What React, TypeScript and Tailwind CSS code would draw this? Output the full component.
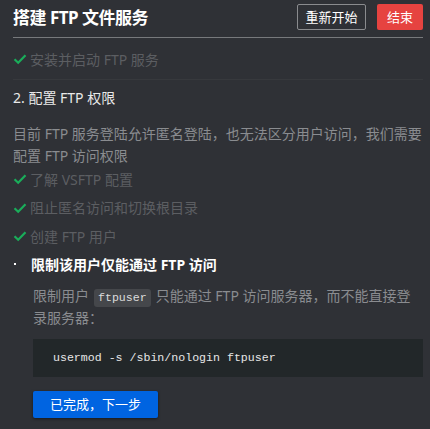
import React from 'react';

const font = { fontFamily: '"Noto Sans", "Noto Sans CJK SC", sans-serif' };
const mono = { fontFamily: '"Liberation Mono", monospace' };

const Check: React.FC = () => (
    <svg viewBox="0 0 14 14" className="h-[14px] w-[14px] mr-[3px] shrink-0" fill="none">
        <path d="M1.5 7.2 L5.2 10.8 L12.5 3.2" stroke="#1aad5a" strokeWidth="2.2" strokeLinejoin="miter" />
    </svg>
);

const DoneItem: React.FC<{ label: string }> = ({ label }) => (
    <div className="flex items-center h-[20px] text-[14px] text-[#5c5e62]">
        <Check />
        <span>{label}</span>
    </div>
);

const App: React.FC = () => {
    return (
        <div className="w-[430px] h-[429px] bg-[#2f3136] pl-[13px] pr-[7px] pt-[4px] overflow-hidden" style={font}>
            <div className="flex items-center justify-between h-[26px]">
                <h1 className="text-[17px] font-bold text-white leading-none tracking-[-0.5px]">搭建 FTP 文件服务</h1>
                <div className="flex gap-[11px]">
                    <button className="h-[26px] w-[69px] border border-[#8a8b8e] rounded-[2px] text-[13px] text-white leading-none">重新开始</button>
                    <button className="h-[26px] w-[46px] bg-[#e64340] rounded-[2px] text-[13px] text-white leading-none">结束</button>
                </div>
            </div>
            <div className="mt-[7px] h-px bg-[#77797c]" />

            <div className="pt-[11px] pb-[10px] border-b border-[#37393d]">
                <DoneItem label="安装并启动 FTP 服务" />
            </div>

            <h2 className="mt-[7px] h-[20px] flex items-center text-[14px] text-[#e9e9e9]">2. 配置 FTP 权限</h2>

            <p className="mt-[16px] text-[14px] leading-[22px] text-[#8a8c90]">
                目前 FTP 服务登陆允许匿名登陆，也无法区分用户访问，我们需要配置 FTP 访问权限
            </p>

            <div className="mt-[2px] flex flex-col gap-[8.5px]">
                <DoneItem label="了解 VSFTP 配置" />
                <DoneItem label="阻止匿名访问和切换根目录" />
                <DoneItem label="创建 FTP 用户" />
            </div>

            <div className="mt-[8px] flex items-center h-[20px]">
                <span className="w-[2px] h-[2px] bg-white mr-[15px] ml-[1px]" />
                <span className="text-[14px] font-bold text-white">限制该用户仅能通过 FTP 访问</span>
            </div>

            <div className="pl-[20px]">
                <p className="mt-[11px] text-[14px] leading-[21px] text-[#8a8c90] whitespace-nowrap">
                    <span>限制用户</span>
                    <code className="inline-block mx-[5px] leading-[18px] bg-[#45474b] text-[#dcdcdc] rounded-[3px] px-[4px] text-[11.6px]" style={mono}>ftpuser</code>
                    <span>只能通过 FTP 访问服务器，而不能直接登</span>
                    <br />
                    <span>录服务器：</span>
                </p>
                <pre className="mt-[11px] h-[38px] bg-[#222729] flex items-center px-[20px] text-[11.6px] text-[#e6e6e6]" style={mono}>usermod -s /sbin/nologin ftpuser</pre>
                <button className="mt-[14px] h-[27px] w-[125px] bg-[#0064e1] rounded-[2px] text-[13px] text-white shadow-[0_1px_3px_rgba(0,0,0,0.5)]">已完成，下一步</button>
            </div>
        </div>
    );
};

export default App;
